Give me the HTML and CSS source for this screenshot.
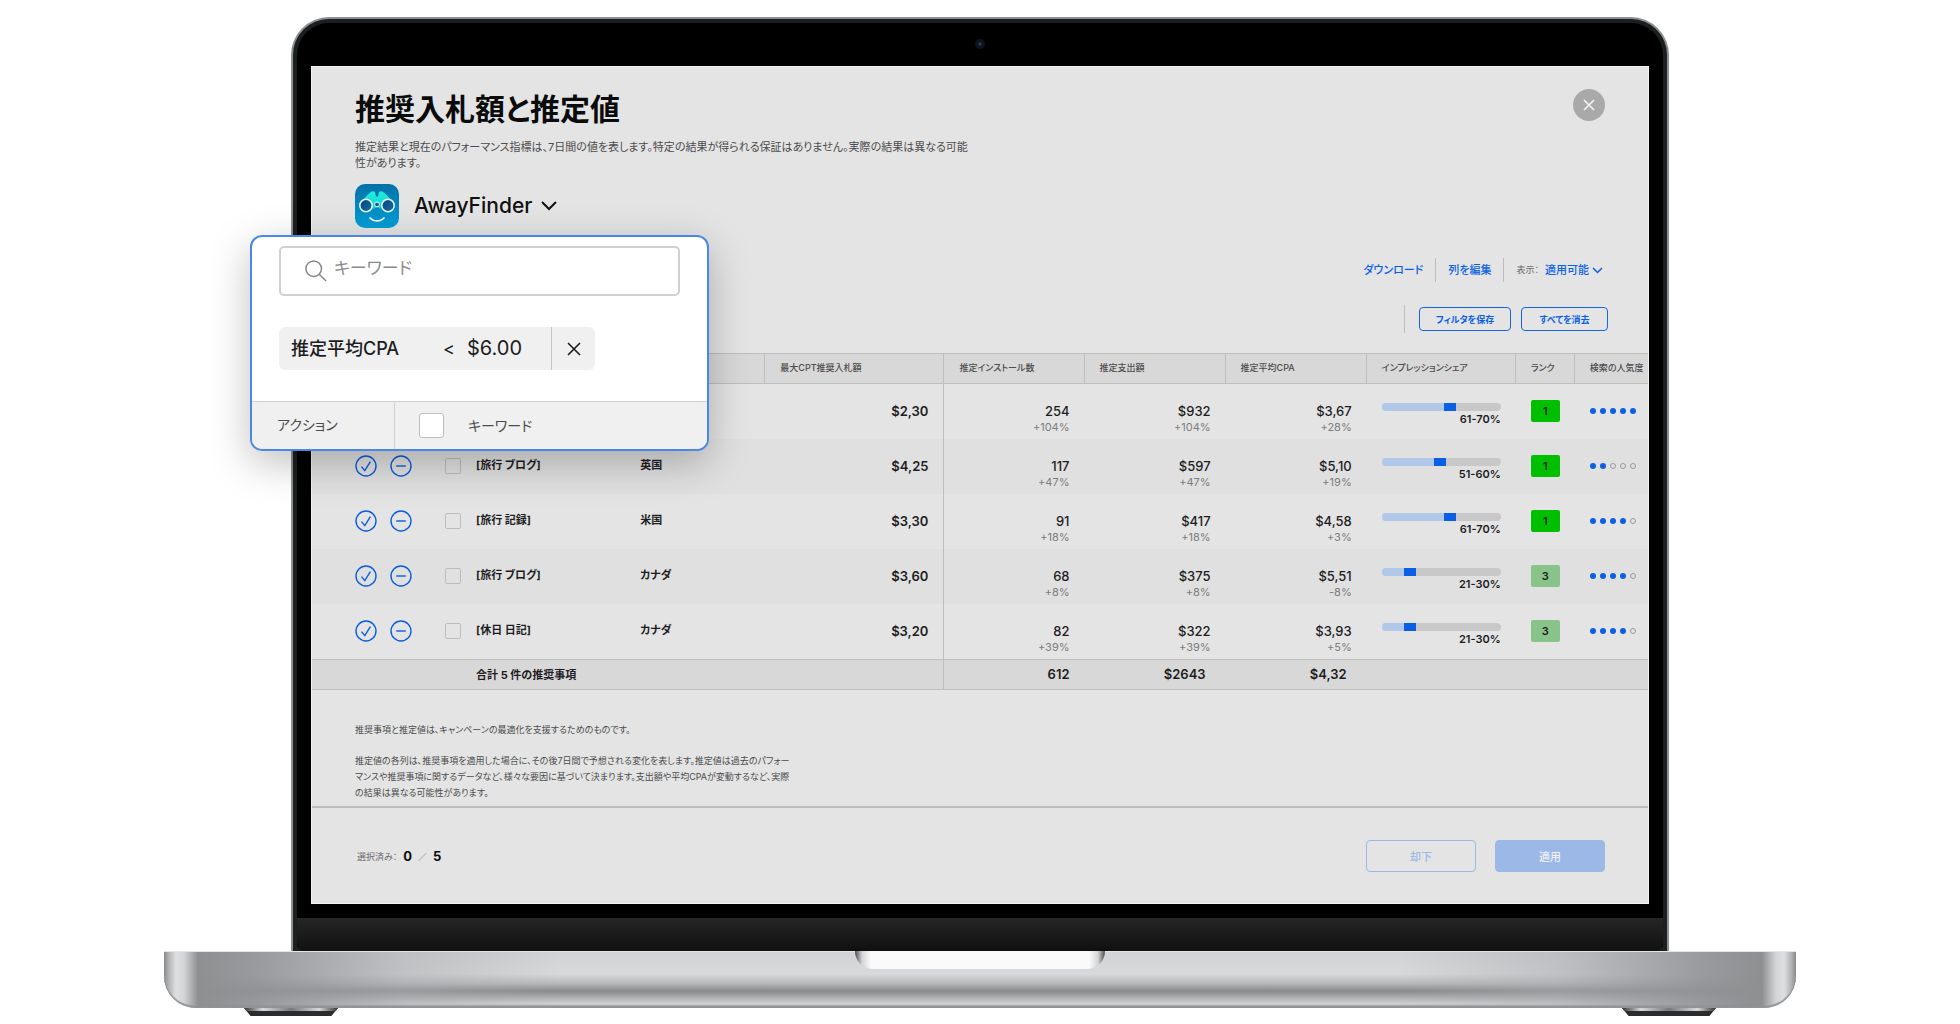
FILE: index.html
```html
<!DOCTYPE html>
<html lang="ja">
<head>
<meta charset="utf-8">
<meta name="viewport" content="width=device-width, initial-scale=1">
<title>推奨入札額と推定値</title>
<link rel="stylesheet" href="styles.css">
</head>
<body>
<svg class="defs" aria-hidden="true">
  <symbol id="accept" viewBox="0 0 22 22"><circle cx="11" cy="11" r="10"/><path d="M6.5 11.6 9.8 15.6 15.4 6.6"/></symbol>
  <symbol id="dismiss" viewBox="0 0 22 22"><circle cx="11" cy="11" r="10"/><path d="M6.2 11h9.6"/></symbol>
</svg>
<main class="laptop">
  <div class="lid">
    <span class="camera"></span>
    <div class="screen">
      <header class="head">
        <div class="head-text">
          <h1>推奨入札額と推定値</h1>
          <p class="intro">推定結果と現在のパフォーマンス指標は、7日間の値を表します。特定の結果が得られる保証はありません。実際の結果は異なる可能性があります。</p>
        </div>
        <button class="close" aria-label="閉じる"><svg viewBox="0 0 12 12"><path d="M1 1l10 10M11 1 1 11"/></svg></button>
      </header>
      <button class="app-picker">
        <svg class="app-icon" viewBox="0 0 44 44">
          <defs>
            <linearGradient id="sky" x2="0" y2="1"><stop offset="0" stop-color="#0670a8"/><stop offset="1" stop-color="#02a0d8"/></linearGradient>
            <linearGradient id="teal" x2="0" y2="1"><stop offset="0" stop-color="#1df0dc"/><stop offset="1" stop-color="#12cfd8"/></linearGradient>
            <linearGradient id="lens" x2="1" y2="1"><stop offset="0" stop-color="#0a3f7c"/><stop offset="1" stop-color="#1670ac"/></linearGradient>
          </defs>
          <rect width="44" height="44" rx="10" fill="url(#sky)"/>
          <path d="M4.500 20C9 15 12 11 15.500 8.200c2-1.500 4.500-1 4.800 1.300l.7 3h2l.7-3c.3-2.300 2.800-2.800 4.800-1.300C32 11 35 15 39.500 20l-7 8-10.500-5-10.500 5z" fill="url(#teal)"/>
          <circle cx="11" cy="21.500" r="6.200" fill="url(#lens)" stroke="#e8fbff" stroke-width="1.500"/>
          <circle cx="33" cy="21.500" r="6.200" fill="url(#lens)" stroke="#e8fbff" stroke-width="1.500"/>
          <circle cx="22" cy="20.500" r="2.400" fill="#0f5c96" stroke="#e8fbff" stroke-width="1"/>
          <path d="M14.500 33.500c4 4.500 11 4.500 15 0" fill="none" stroke="#fff" stroke-width="1.600"/>
        </svg>
        <span>AwayFinder</span>
        <svg class="chevron" viewBox="0 0 16 10"><path d="M1 1l7 7 7-7"/></svg>
      </button>
      <nav class="links">
        <a href="#">ダウンロード</a>
        <a href="#">列を編集</a>
        <span class="view"><small>表示：</small><a href="#">適用可能<svg class="chevron-s" viewBox="0 0 11 7"><path d="M1 1l4.500 4.500L10 1"/></svg></a></span>
      </nav>
      <div class="filters">
        <button class="outline">フィルタを保存</button>
        <button class="outline">すべてを消去</button>
      </div>
      <table>
        <colgroup><col class="c-act"><col class="c-check"><col class="c-name"><col class="c-country"><col class="c-bid"><col class="c-inst"><col class="c-num"><col class="c-num"><col class="c-share"><col class="c-rank"><col class="c-pop"></colgroup>
        <thead><tr><th colspan="4"></th><th>最大CPT推奨入札額</th><th>推定インストール数</th><th>推定支出額</th><th>推定平均CPA</th><th>インプレッションシェア</th><th>ランク</th><th>検索の人気度</th></tr></thead>
        <tbody>
          <tr><td></td><td></td><td></td><td></td><td class="bid">$2,30</td>
            <td class="num">254<small>+104%</small></td><td class="num">$932<small>+104%</small></td><td class="num">$3,67<small>+28%</small></td>
            <td class="share"><div class="bar"><i style="width:52%"></i></div>61-70%</td><td class="rank"><b>1</b></td><td class="pop"><i></i><i></i><i></i><i></i><i></i></td></tr>
          <tr><td class="act"><button aria-label="適用"><svg><use href="#accept"/></svg></button><button aria-label="却下"><svg><use href="#dismiss"/></svg></button></td><td class="check"><input type="checkbox" aria-label="選択"></td><td class="name">[旅行 ブログ]</td><td class="name">英国</td><td class="bid">$4,25</td>
            <td class="num">117<small>+47%</small></td><td class="num">$597<small>+47%</small></td><td class="num">$5,10<small>+19%</small></td>
            <td class="share"><div class="bar"><i style="width:44%"></i></div>51-60%</td><td class="rank"><b>1</b></td><td class="pop"><i></i><i></i><i class="off"></i><i class="off"></i><i class="off"></i></td></tr>
          <tr><td class="act"><button aria-label="適用"><svg><use href="#accept"/></svg></button><button aria-label="却下"><svg><use href="#dismiss"/></svg></button></td><td class="check"><input type="checkbox" aria-label="選択"></td><td class="name">[旅行 記録]</td><td class="name">米国</td><td class="bid">$3,30</td>
            <td class="num">91<small>+18%</small></td><td class="num">$417<small>+18%</small></td><td class="num">$4,58<small>+3%</small></td>
            <td class="share"><div class="bar"><i style="width:52%"></i></div>61-70%</td><td class="rank"><b>1</b></td><td class="pop"><i></i><i></i><i></i><i></i><i class="off"></i></td></tr>
          <tr><td class="act"><button aria-label="適用"><svg><use href="#accept"/></svg></button><button aria-label="却下"><svg><use href="#dismiss"/></svg></button></td><td class="check"><input type="checkbox" aria-label="選択"></td><td class="name">[旅行 ブログ]</td><td class="name">カナダ</td><td class="bid">$3,60</td>
            <td class="num">68<small>+8%</small></td><td class="num">$375<small>+8%</small></td><td class="num">$5,51<small>-8%</small></td>
            <td class="share"><div class="bar"><i style="width:19%"></i></div>21-30%</td><td class="rank"><b class="low">3</b></td><td class="pop"><i></i><i></i><i></i><i></i><i class="off"></i></td></tr>
          <tr><td class="act"><button aria-label="適用"><svg><use href="#accept"/></svg></button><button aria-label="却下"><svg><use href="#dismiss"/></svg></button></td><td class="check"><input type="checkbox" aria-label="選択"></td><td class="name">[休日 日記]</td><td class="name">カナダ</td><td class="bid">$3,20</td>
            <td class="num">82<small>+39%</small></td><td class="num">$322<small>+39%</small></td><td class="num">$3,93<small>+5%</small></td>
            <td class="share"><div class="bar"><i style="width:19%"></i></div>21-30%</td><td class="rank"><b class="low">3</b></td><td class="pop"><i></i><i></i><i></i><i></i><i class="off"></i></td></tr>
        </tbody>
        <tfoot><tr><td colspan="2"></td><td colspan="2">合計 5 件の推奨事項</td><td></td><td class="sum first">612</td><td class="sum">$2643</td><td class="sum">$4,32</td><td colspan="3"></td></tr></tfoot>
      </table>
      <section class="notes">
        <p>推奨事項と推定値は、キャンペーンの最適化を支援するためのものです。</p>
        <p>推定値の各列は、推奨事項を適用した場合に、その後7日間で予想される変化を表します。推定値は過去のパフォー<br>マンスや推奨事項に関するデータなど、様々な要因に基づいて決まります。支出額や平均CPAが変動するなど、実際<br>の結果は異なる可能性があります。</p>
      </section>
      <footer class="bottom">
        <p class="count">選択済み：<b>0</b>／<b>5</b></p>
        <button class="reject">却下</button>
        <button class="apply">適用</button>
      </footer>
    </div>
    <div class="chin"></div>
    <section class="popup">
      <label class="search"><svg viewBox="0 0 24 24"><circle cx="9.500" cy="9.500" r="8.500"/><path d="M15.500 15.500 23 23"/></svg><input type="text" placeholder="キーワード" aria-label="キーワード"></label>
      <div class="chip"><span class="chip-name">推定平均CPA</span><span class="op">&lt;</span><span class="amount">$6.00</span><button aria-label="フィルタを削除"><svg viewBox="0 0 14 14"><path d="M1 1l12 12M13 1 1 13"/></svg></button></div>
      <div class="popup-row"><span class="popup-act">アクション</span><label><input type="checkbox">キーワード</label></div>
    </section>
  </div>
  <div class="base"><span class="notch"></span></div>
  <div class="feet"><span></span><span></span></div>
</main>
</body>
</html>
```
FILE: styles.css
```css
* { box-sizing: border-box; }
body {
  margin: 0;
  background: #fff;
  color: #1d1d1f;
  font-family: Inter, "Noto Sans CJK JP", sans-serif;
  font-feature-settings: "palt";
  font-size: 11px;
}
h1, p { margin: 0; }
button { margin: 0; padding: 0; border: 0; background: none; font: inherit; color: inherit; cursor: pointer; }
a { color: #0a60e8; text-decoration: none; }
svg { display: block; fill: none; stroke: currentColor; }
.defs { position: absolute; width: 0; height: 0; }

/* Laptop body */
.laptop { padding: 17px 164px 0; }
.lid {
  position: relative;
  margin: 0 127px;
  padding: 47px 18px 0;
  border: 2px solid #8d9092;
  border-bottom: 0;
  border-radius: 38px 38px 0 0;
  background: #000;
  box-shadow: inset 0 0 0 4px #1c1f1f;
}
.camera {
  position: absolute;
  top: 20px;
  left: 50%;
  width: 10px;
  height: 10px;
  margin-left: -5px;
  border-radius: 50%;
  background: radial-gradient(#24407c 0 1px, #111317 2px);
}
.chin {
  height: 33px;
  margin: 14px -14px 0;
  border-radius: 0 0 8px 8px;
  background: linear-gradient(#262626, #101010);
}
.base {
  position: relative;
  height: 57px;
  border-top: 1px solid #e4e4e6;
  border-radius: 0 0 32px 32px;
  background:
    linear-gradient(90deg, #8a8b8d 0, #b4b5b7 5px, #dedfe1 12px, #d4d5d7 20px, #8e8f91 34px, rgba(146, 147, 150, .9) 90px, rgba(170, 171, 174, .5) 240px, transparent 400px, transparent calc(100% - 400px), rgba(170, 171, 174, .5) calc(100% - 240px), rgba(146, 147, 150, .9) calc(100% - 90px), #8e8f91 calc(100% - 34px), #d4d5d7 calc(100% - 20px), #dedfe1 calc(100% - 12px), #b4b5b7 calc(100% - 5px), #8a8b8d),
    linear-gradient(#d2d3d5 0, #d8d9db 22px, #b9babc 31px, #88898b 39px, #b5b6b8 47px, #d2d3d5 52px, #88898b 55px, #c5c6c8);
  box-shadow: inset 0 -2px 1px #929395;
}
.notch {
  position: absolute;
  top: -1px;
  left: 50%;
  width: 250px;
  height: 18px;
  margin-left: -125px;
  border-radius: 0 0 18px 18px;
  background: linear-gradient(90deg, #4b4b4d, #d5d5d7 7px, #fafafb 16px, #fafafb calc(100% - 16px), #d5d5d7 calc(100% - 7px), #4b4b4d);
}
.feet { display: flex; justify-content: space-between; padding: 0 80px; }
.feet span {
  width: 94px;
  height: 8px;
  background: linear-gradient(90deg, #333, #d8d9da 20%, #77787a 50%, #d8d9da 80%, #333) 0 0 / 100% 3px no-repeat, #2b2c2d;
  clip-path: polygon(0 0, 100% 0, 93% 100%, 7% 100%);
}

/* Screen */
.screen { background: #e4e4e4; border: 1px solid #f2f2f2; }
.head { display: flex; justify-content: space-between; padding: 22px 43px 0; }
.head-text { width: 617px; }
h1 { font-size: 30px; line-height: 40px; font-weight: 700; color: #0b0b0c; }
.intro { margin-top: 10px; font-size: 11px; line-height: 16px; color: #4c4c4e; }
.close { display: grid; place-items: center; width: 32px; height: 32px; border-radius: 50%; background: #a9a9a9; color: #f4f4f4; }
.close svg { width: 12px; height: 12px; stroke-width: 1.600; }
.app-picker { display: flex; align-items: center; margin: 13px 0 0 43px; font-size: 21px; font-weight: 500; line-height: 44px; color: #111; }
.app-icon { width: 44px; height: 44px; margin-right: 15px; stroke: none; }
.chevron { width: 16px; height: 10px; margin-left: 9px; stroke-width: 2; }
.links { display: flex; justify-content: flex-end; align-items: center; height: 24px; margin: 30px 45px 0 0; font-weight: 500; }
.links > * { padding: 0 12px; line-height: 24px; border-left: 1px solid #bdbdbf; }
.links > :first-child { border-left: 0; }
.links > :last-child { padding-right: 0; }
.view { display: flex; gap: 6px; }
.view small { font-size: 9px; font-weight: 400; color: #6c6c6e; }
.view a { display: flex; align-items: center; gap: 3px; }
.chevron-s { width: 11px; height: 7px; stroke-width: 1.500; }
.filters { display: flex; justify-content: flex-end; align-items: center; gap: 10px; margin: 23px 40px 20px 0; }
.filters::before { content: ""; width: 1px; height: 28px; margin-right: 4px; background: #bdbdbf; }
.outline { width: 92px; height: 24px; border: 1px solid #1565e6; border-radius: 4px; font-size: 9px; font-weight: 700; color: #0a60e8; }
.outline + .outline { width: 87px; }

/* Recommendations */
table { width: 100%; table-layout: fixed; border-collapse: separate; border-spacing: 0; }
.c-act { width: 116px; }
.c-check { width: 48px; }
.c-name { width: 164px; }
.c-country { width: 125px; }
.c-bid { width: 179px; }
.c-inst { width: 140px; }
.c-num { width: 141px; }
.c-share { width: 149px; }
.c-rank { width: 59px; }
.c-pop { width: 73px; }
th, td { padding: 0; text-align: left; }
th {
  height: 31px;
  padding: 0 0 2px 15px;
  border: 1px solid #bebebe;
  border-left: 0;
  background: #d8d8d8;
  font-size: 9px;
  font-weight: 500;
  color: #4c4c4e;
  white-space: nowrap;
}
th:last-child { border-right: 0; }
tbody td { height: 55px; vertical-align: top; line-height: 18px; }
tbody tr:nth-child(even) { background: #e0e0e0; }
td:nth-child(5) { border-right: 1px solid #bebebe; }
.act { padding: 16px 0 0 43px; white-space: nowrap; }
.act button { display: inline-block; margin-right: 13px; color: #0a5ce0; }
.act svg { width: 22px; height: 22px; stroke-width: 1.400; }
.check { padding: 19px 0 0 17px; }
input[type="checkbox"] { appearance: none; display: block; width: 16px; height: 16px; margin: 0; border: 1px solid #bcbcbe; border-radius: 2px; }
.name { padding-top: 17px; font-size: 11px; font-weight: 700; }
.bid { padding: 18px 15px 0 0; text-align: right; font-size: 13px; font-weight: 600; }
.num { padding: 18px 15px 0 0; text-align: right; font-size: 13px; font-weight: 500; }
.num small { display: block; font-size: 11px; line-height: 14px; font-weight: 400; color: #7c7c7e; }
.share { padding: 19px 15px 0; text-align: right; font-size: 11px; font-weight: 600; line-height: 16px; }
.bar { display: flex; height: 8px; border-radius: 4px; background: #c8c8c8; overflow: hidden; }
.bar i { background: #b2c8e8; }
.bar::after { content: ""; width: 12px; background: #0a5fe4; }
.rank { padding: 16px 15px 0; }
.rank b { display: block; height: 22px; border-radius: 2px; background: #00be00; text-align: center; font-size: 11px; line-height: 22px; font-weight: 600; }
.rank .low { background: #88c48a; }
.pop { padding: 24px 0 0 15px; white-space: nowrap; font-size: 0; }
.pop i { display: inline-block; width: 6px; height: 6px; margin-right: 4px; border-radius: 50%; background: #0a5fe4; vertical-align: top; }
.pop .off { background: none; border: 1px solid #9a9a9c; }
tfoot td { height: 31px; padding-bottom: 2px; border: 1px solid #bebebe; border-width: 1px 0; background: #d8d8d8; font-size: 11px; font-weight: 700; }
tfoot td:nth-child(3) { border-right: 1px solid #bebebe; }
tfoot td.sum { padding-right: 20px; border-right: 0; text-align: right; font-size: 13px; font-weight: 600; }
tfoot td.first { padding-right: 15px; }

.notes { padding: 32px 43px 5px; font-size: 9px; line-height: 16px; color: #4c4c4e; }
.notes p + p { margin-top: 15px; }
.bottom { display: flex; align-items: center; gap: 19px; padding: 32px 43px 31px 45px; border-top: 2px solid #bdbdbf; }
.count { display: flex; align-items: center; gap: 6px; margin-right: auto; font-size: 9px; color: #6c6c6e; }
.count b { font-size: 13px; color: #0b0b0c; }
.reject, .apply { width: 110px; height: 32px; border: 1px solid #9cb8e4; border-radius: 4px; font-size: 11px; font-weight: 500; color: #9cb8e4; }
.apply { background: #9cb8e6; color: #eef1f6; }

/* Filter popup, laid over the screen edge */
.popup {
  position: absolute;
  top: 216px;
  left: -43px;
  width: 459px;
  border: 2px solid #4a88e8;
  border-radius: 12px;
  background: #fff;
  box-shadow: 0 12px 40px rgba(0, 0, 0, .25);
  overflow: hidden;
}
.search { display: flex; align-items: center; gap: 7px; height: 50px; margin: 9px 27px 0; padding-left: 24px; border: 2px solid #d0d0d2; border-radius: 5px; color: #86868a; }
.search svg { width: 22px; height: 22px; stroke-width: 1.600; }
.search input { flex: 1; min-width: 0; padding: 0 0 6px; border: 0; outline: 0; background: none; font: inherit; font-size: 17px; line-height: 24px; font-feature-settings: "palt"; }
.search input::placeholder { color: #8a8a8e; opacity: 1; }
.chip { display: flex; align-items: center; width: 316px; height: 43px; margin: 31px 27px; border-radius: 6px; background: #f0f0f0; font-size: 20px; line-height: 43px; }
.chip-name { width: 150px; padding-left: 12px; font-size: 18px; font-weight: 500; }
.op { width: 26px; padding-left: 14px; font-size: 18px; }
.amount { flex: 1; padding-left: 12px; }
.chip button { display: grid; place-items: center; width: 44px; height: 43px; border-left: 1px solid #c4c4c6; }
.chip svg { width: 14px; height: 14px; stroke-width: 1.600; }
.popup-row { display: flex; height: 48px; border-top: 1px solid #cfcfd1; background: #f0f0f0; font-size: 14px; line-height: 45px; color: #4c4c4e; }
.popup-act { width: 143px; padding-left: 25px; border-right: 1px solid #cfcfd1; }
.popup-row label { display: flex; align-items: center; gap: 24px; padding-left: 24px; }
.popup-row input[type="checkbox"] { width: 25px; height: 25px; border-radius: 3px; background: #fff; }
```
